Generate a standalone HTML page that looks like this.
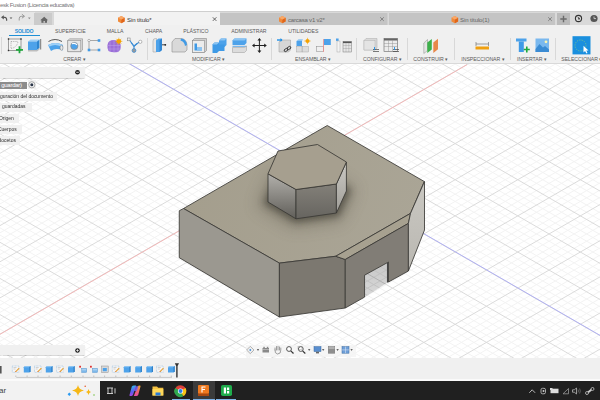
<!DOCTYPE html>
<html><head><meta charset="utf-8">
<style>
*{margin:0;padding:0;box-sizing:border-box}
html,body{width:600px;height:400px;overflow:hidden;background:#fff;font-family:"Liberation Sans",sans-serif}
.a{position:absolute}
.t{position:absolute;white-space:nowrap;line-height:1}
svg{position:absolute;left:0;top:0}
.lbl{position:absolute;white-space:nowrap;line-height:1;font-size:5.2px;color:#5a5a5a;letter-spacing:-0.05px}
.sep{position:absolute;width:1px;background:#d8d8d8;top:38px;height:22px}
.bi{position:absolute;left:0;height:8.5px;background:#f0f0f0;white-space:nowrap}.bt{position:absolute;white-space:nowrap;font-size:5.8px;color:#2a2a2a;line-height:1;transform:scaleX(0.855);transform-origin:0 0}
</style></head><body>
<!-- viewport -->
<svg width="600" height="400" viewBox="0 0 600 400">
<defs><clipPath id="vp"><rect x="0" y="63" width="600" height="296"/></clipPath></defs>
<g clip-path="url(#vp)" shape-rendering="auto">
<line x1="0" y1="-285.49" x2="600" y2="60.92" stroke="#f3f3f3"/><line x1="0" y1="-278.26" x2="600" y2="68.15" stroke="#f3f3f3"/><line x1="0" y1="-271.03" x2="600" y2="75.38" stroke="#f3f3f3"/><line x1="0" y1="-256.57" x2="600" y2="89.84" stroke="#f3f3f3"/><line x1="0" y1="-249.34" x2="600" y2="97.07" stroke="#f3f3f3"/><line x1="0" y1="-242.11" x2="600" y2="104.30" stroke="#f3f3f3"/><line x1="0" y1="-234.88" x2="600" y2="111.53" stroke="#f3f3f3"/><line x1="0" y1="-220.42" x2="600" y2="125.99" stroke="#f3f3f3"/><line x1="0" y1="-213.19" x2="600" y2="133.22" stroke="#f3f3f3"/><line x1="0" y1="-205.96" x2="600" y2="140.45" stroke="#f3f3f3"/><line x1="0" y1="-198.73" x2="600" y2="147.68" stroke="#f3f3f3"/><line x1="0" y1="-184.27" x2="600" y2="162.14" stroke="#f3f3f3"/><line x1="0" y1="-177.04" x2="600" y2="169.37" stroke="#f3f3f3"/><line x1="0" y1="-169.81" x2="600" y2="176.60" stroke="#f3f3f3"/><line x1="0" y1="-162.58" x2="600" y2="183.83" stroke="#f3f3f3"/><line x1="0" y1="-148.12" x2="600" y2="198.29" stroke="#f3f3f3"/><line x1="0" y1="-140.89" x2="600" y2="205.52" stroke="#f3f3f3"/><line x1="0" y1="-133.66" x2="600" y2="212.75" stroke="#f3f3f3"/><line x1="0" y1="-126.43" x2="600" y2="219.98" stroke="#f3f3f3"/><line x1="0" y1="-111.97" x2="600" y2="234.44" stroke="#f3f3f3"/><line x1="0" y1="-104.74" x2="600" y2="241.67" stroke="#f3f3f3"/><line x1="0" y1="-97.51" x2="600" y2="248.90" stroke="#f3f3f3"/><line x1="0" y1="-90.28" x2="600" y2="256.13" stroke="#f3f3f3"/><line x1="0" y1="-75.82" x2="600" y2="270.59" stroke="#f3f3f3"/><line x1="0" y1="-68.59" x2="600" y2="277.82" stroke="#f3f3f3"/><line x1="0" y1="-61.36" x2="600" y2="285.05" stroke="#f3f3f3"/><line x1="0" y1="-54.13" x2="600" y2="292.28" stroke="#f3f3f3"/><line x1="0" y1="-39.67" x2="600" y2="306.74" stroke="#f3f3f3"/><line x1="0" y1="-32.44" x2="600" y2="313.97" stroke="#f3f3f3"/><line x1="0" y1="-25.21" x2="600" y2="321.20" stroke="#f3f3f3"/><line x1="0" y1="-17.98" x2="600" y2="328.43" stroke="#f3f3f3"/><line x1="0" y1="-3.52" x2="600" y2="342.89" stroke="#f3f3f3"/><line x1="0" y1="3.71" x2="600" y2="350.12" stroke="#f3f3f3"/><line x1="0" y1="10.94" x2="600" y2="357.35" stroke="#f3f3f3"/><line x1="0" y1="18.17" x2="600" y2="364.58" stroke="#f3f3f3"/><line x1="0" y1="32.63" x2="600" y2="379.04" stroke="#f3f3f3"/><line x1="0" y1="39.86" x2="600" y2="386.27" stroke="#f3f3f3"/><line x1="0" y1="47.09" x2="600" y2="393.50" stroke="#f3f3f3"/><line x1="0" y1="54.32" x2="600" y2="400.73" stroke="#f3f3f3"/><line x1="0" y1="68.78" x2="600" y2="415.19" stroke="#f3f3f3"/><line x1="0" y1="76.01" x2="600" y2="422.42" stroke="#f3f3f3"/><line x1="0" y1="83.24" x2="600" y2="429.65" stroke="#f3f3f3"/><line x1="0" y1="90.47" x2="600" y2="436.88" stroke="#f3f3f3"/><line x1="0" y1="104.93" x2="600" y2="451.34" stroke="#f3f3f3"/><line x1="0" y1="112.16" x2="600" y2="458.57" stroke="#f3f3f3"/><line x1="0" y1="119.39" x2="600" y2="465.80" stroke="#f3f3f3"/><line x1="0" y1="126.62" x2="600" y2="473.03" stroke="#f3f3f3"/><line x1="0" y1="141.08" x2="600" y2="487.49" stroke="#f3f3f3"/><line x1="0" y1="148.31" x2="600" y2="494.72" stroke="#f3f3f3"/><line x1="0" y1="155.54" x2="600" y2="501.95" stroke="#f3f3f3"/><line x1="0" y1="162.77" x2="600" y2="509.18" stroke="#f3f3f3"/><line x1="0" y1="177.23" x2="600" y2="523.64" stroke="#f3f3f3"/><line x1="0" y1="184.46" x2="600" y2="530.87" stroke="#f3f3f3"/><line x1="0" y1="191.69" x2="600" y2="538.10" stroke="#f3f3f3"/><line x1="0" y1="198.92" x2="600" y2="545.33" stroke="#f3f3f3"/><line x1="0" y1="213.38" x2="600" y2="559.79" stroke="#f3f3f3"/><line x1="0" y1="220.61" x2="600" y2="567.02" stroke="#f3f3f3"/><line x1="0" y1="227.84" x2="600" y2="574.25" stroke="#f3f3f3"/><line x1="0" y1="235.07" x2="600" y2="581.48" stroke="#f3f3f3"/><line x1="0" y1="249.53" x2="600" y2="595.94" stroke="#f3f3f3"/><line x1="0" y1="256.76" x2="600" y2="603.17" stroke="#f3f3f3"/><line x1="0" y1="263.99" x2="600" y2="610.40" stroke="#f3f3f3"/><line x1="0" y1="271.22" x2="600" y2="617.63" stroke="#f3f3f3"/><line x1="0" y1="285.68" x2="600" y2="632.09" stroke="#f3f3f3"/><line x1="0" y1="292.91" x2="600" y2="639.32" stroke="#f3f3f3"/><line x1="0" y1="300.14" x2="600" y2="646.55" stroke="#f3f3f3"/><line x1="0" y1="307.37" x2="600" y2="653.78" stroke="#f3f3f3"/><line x1="0" y1="321.83" x2="600" y2="668.24" stroke="#f3f3f3"/><line x1="0" y1="329.06" x2="600" y2="675.47" stroke="#f3f3f3"/><line x1="0" y1="336.29" x2="600" y2="682.70" stroke="#f3f3f3"/><line x1="0" y1="343.52" x2="600" y2="689.93" stroke="#f3f3f3"/><line x1="0" y1="357.98" x2="600" y2="704.39" stroke="#f3f3f3"/><line x1="0" y1="59.31" x2="600" y2="-287.10" stroke="#f3f3f3"/><line x1="0" y1="66.54" x2="600" y2="-279.87" stroke="#f3f3f3"/><line x1="0" y1="73.77" x2="600" y2="-272.64" stroke="#f3f3f3"/><line x1="0" y1="88.23" x2="600" y2="-258.18" stroke="#f3f3f3"/><line x1="0" y1="95.46" x2="600" y2="-250.95" stroke="#f3f3f3"/><line x1="0" y1="102.69" x2="600" y2="-243.72" stroke="#f3f3f3"/><line x1="0" y1="109.92" x2="600" y2="-236.49" stroke="#f3f3f3"/><line x1="0" y1="124.38" x2="600" y2="-222.03" stroke="#f3f3f3"/><line x1="0" y1="131.61" x2="600" y2="-214.80" stroke="#f3f3f3"/><line x1="0" y1="138.84" x2="600" y2="-207.57" stroke="#f3f3f3"/><line x1="0" y1="146.07" x2="600" y2="-200.34" stroke="#f3f3f3"/><line x1="0" y1="160.53" x2="600" y2="-185.88" stroke="#f3f3f3"/><line x1="0" y1="167.76" x2="600" y2="-178.65" stroke="#f3f3f3"/><line x1="0" y1="174.99" x2="600" y2="-171.42" stroke="#f3f3f3"/><line x1="0" y1="182.22" x2="600" y2="-164.19" stroke="#f3f3f3"/><line x1="0" y1="196.68" x2="600" y2="-149.73" stroke="#f3f3f3"/><line x1="0" y1="203.91" x2="600" y2="-142.50" stroke="#f3f3f3"/><line x1="0" y1="211.14" x2="600" y2="-135.27" stroke="#f3f3f3"/><line x1="0" y1="218.37" x2="600" y2="-128.04" stroke="#f3f3f3"/><line x1="0" y1="232.83" x2="600" y2="-113.58" stroke="#f3f3f3"/><line x1="0" y1="240.06" x2="600" y2="-106.35" stroke="#f3f3f3"/><line x1="0" y1="247.29" x2="600" y2="-99.12" stroke="#f3f3f3"/><line x1="0" y1="254.52" x2="600" y2="-91.89" stroke="#f3f3f3"/><line x1="0" y1="268.98" x2="600" y2="-77.43" stroke="#f3f3f3"/><line x1="0" y1="276.21" x2="600" y2="-70.20" stroke="#f3f3f3"/><line x1="0" y1="283.44" x2="600" y2="-62.97" stroke="#f3f3f3"/><line x1="0" y1="290.67" x2="600" y2="-55.74" stroke="#f3f3f3"/><line x1="0" y1="305.13" x2="600" y2="-41.28" stroke="#f3f3f3"/><line x1="0" y1="312.36" x2="600" y2="-34.05" stroke="#f3f3f3"/><line x1="0" y1="319.59" x2="600" y2="-26.82" stroke="#f3f3f3"/><line x1="0" y1="326.82" x2="600" y2="-19.59" stroke="#f3f3f3"/><line x1="0" y1="341.28" x2="600" y2="-5.13" stroke="#f3f3f3"/><line x1="0" y1="348.51" x2="600" y2="2.10" stroke="#f3f3f3"/><line x1="0" y1="355.74" x2="600" y2="9.33" stroke="#f3f3f3"/><line x1="0" y1="362.97" x2="600" y2="16.56" stroke="#f3f3f3"/><line x1="0" y1="377.43" x2="600" y2="31.02" stroke="#f3f3f3"/><line x1="0" y1="384.66" x2="600" y2="38.25" stroke="#f3f3f3"/><line x1="0" y1="391.89" x2="600" y2="45.48" stroke="#f3f3f3"/><line x1="0" y1="399.12" x2="600" y2="52.71" stroke="#f3f3f3"/><line x1="0" y1="413.58" x2="600" y2="67.17" stroke="#f3f3f3"/><line x1="0" y1="420.81" x2="600" y2="74.40" stroke="#f3f3f3"/><line x1="0" y1="428.04" x2="600" y2="81.63" stroke="#f3f3f3"/><line x1="0" y1="435.27" x2="600" y2="88.86" stroke="#f3f3f3"/><line x1="0" y1="449.73" x2="600" y2="103.32" stroke="#f3f3f3"/><line x1="0" y1="456.96" x2="600" y2="110.55" stroke="#f3f3f3"/><line x1="0" y1="464.19" x2="600" y2="117.78" stroke="#f3f3f3"/><line x1="0" y1="471.42" x2="600" y2="125.01" stroke="#f3f3f3"/><line x1="0" y1="485.88" x2="600" y2="139.47" stroke="#f3f3f3"/><line x1="0" y1="493.11" x2="600" y2="146.70" stroke="#f3f3f3"/><line x1="0" y1="500.34" x2="600" y2="153.93" stroke="#f3f3f3"/><line x1="0" y1="507.57" x2="600" y2="161.16" stroke="#f3f3f3"/><line x1="0" y1="522.03" x2="600" y2="175.62" stroke="#f3f3f3"/><line x1="0" y1="529.26" x2="600" y2="182.85" stroke="#f3f3f3"/><line x1="0" y1="536.49" x2="600" y2="190.08" stroke="#f3f3f3"/><line x1="0" y1="543.72" x2="600" y2="197.31" stroke="#f3f3f3"/><line x1="0" y1="558.18" x2="600" y2="211.77" stroke="#f3f3f3"/><line x1="0" y1="565.41" x2="600" y2="219.00" stroke="#f3f3f3"/><line x1="0" y1="572.64" x2="600" y2="226.23" stroke="#f3f3f3"/><line x1="0" y1="579.87" x2="600" y2="233.46" stroke="#f3f3f3"/><line x1="0" y1="594.33" x2="600" y2="247.92" stroke="#f3f3f3"/><line x1="0" y1="601.56" x2="600" y2="255.15" stroke="#f3f3f3"/><line x1="0" y1="608.79" x2="600" y2="262.38" stroke="#f3f3f3"/><line x1="0" y1="616.02" x2="600" y2="269.61" stroke="#f3f3f3"/><line x1="0" y1="630.48" x2="600" y2="284.07" stroke="#f3f3f3"/><line x1="0" y1="637.71" x2="600" y2="291.30" stroke="#f3f3f3"/><line x1="0" y1="644.94" x2="600" y2="298.53" stroke="#f3f3f3"/><line x1="0" y1="652.17" x2="600" y2="305.76" stroke="#f3f3f3"/><line x1="0" y1="666.63" x2="600" y2="320.22" stroke="#f3f3f3"/><line x1="0" y1="673.86" x2="600" y2="327.45" stroke="#f3f3f3"/><line x1="0" y1="681.09" x2="600" y2="334.68" stroke="#f3f3f3"/><line x1="0" y1="688.32" x2="600" y2="341.91" stroke="#f3f3f3"/><line x1="0" y1="702.78" x2="600" y2="356.37" stroke="#f3f3f3"/><line x1="0" y1="710.01" x2="600" y2="363.60" stroke="#f3f3f3"/><line x1="0" y1="-263.80" x2="600" y2="82.61" stroke="#dbdbdb"/><line x1="0" y1="-227.65" x2="600" y2="118.76" stroke="#dbdbdb"/><line x1="0" y1="-191.50" x2="600" y2="154.91" stroke="#dbdbdb"/><line x1="0" y1="-155.35" x2="600" y2="191.06" stroke="#dbdbdb"/><line x1="0" y1="-119.20" x2="600" y2="227.21" stroke="#dbdbdb"/><line x1="0" y1="-83.05" x2="600" y2="263.36" stroke="#dbdbdb"/><line x1="0" y1="-46.90" x2="600" y2="299.51" stroke="#dbdbdb"/><line x1="0" y1="-10.75" x2="600" y2="335.66" stroke="#dbdbdb"/><line x1="0" y1="25.40" x2="600" y2="371.81" stroke="#dbdbdb"/><line x1="0" y1="61.55" x2="600" y2="407.96" stroke="#dbdbdb"/><line x1="0" y1="97.70" x2="600" y2="444.11" stroke="#dbdbdb"/><line x1="0" y1="133.85" x2="600" y2="480.26" stroke="#dbdbdb"/><line x1="0" y1="170.00" x2="600" y2="516.41" stroke="#dbdbdb"/><line x1="0" y1="206.15" x2="600" y2="552.56" stroke="#dbdbdb"/><line x1="0" y1="242.30" x2="600" y2="588.71" stroke="#dbdbdb"/><line x1="0" y1="278.45" x2="600" y2="624.86" stroke="#dbdbdb"/><line x1="0" y1="314.60" x2="600" y2="661.01" stroke="#dbdbdb"/><line x1="0" y1="350.75" x2="600" y2="697.16" stroke="#dbdbdb"/><line x1="0" y1="81.00" x2="600" y2="-265.41" stroke="#dbdbdb"/><line x1="0" y1="117.15" x2="600" y2="-229.26" stroke="#dbdbdb"/><line x1="0" y1="153.30" x2="600" y2="-193.11" stroke="#dbdbdb"/><line x1="0" y1="189.45" x2="600" y2="-156.96" stroke="#dbdbdb"/><line x1="0" y1="225.60" x2="600" y2="-120.81" stroke="#dbdbdb"/><line x1="0" y1="261.75" x2="600" y2="-84.66" stroke="#dbdbdb"/><line x1="0" y1="297.90" x2="600" y2="-48.51" stroke="#dbdbdb"/><line x1="0" y1="334.05" x2="600" y2="-12.36" stroke="#dbdbdb"/><line x1="0" y1="370.20" x2="600" y2="23.79" stroke="#dbdbdb"/><line x1="0" y1="406.35" x2="600" y2="59.94" stroke="#dbdbdb"/><line x1="0" y1="442.50" x2="600" y2="96.09" stroke="#dbdbdb"/><line x1="0" y1="478.65" x2="600" y2="132.24" stroke="#dbdbdb"/><line x1="0" y1="514.80" x2="600" y2="168.39" stroke="#dbdbdb"/><line x1="0" y1="550.95" x2="600" y2="204.54" stroke="#dbdbdb"/><line x1="0" y1="587.10" x2="600" y2="240.69" stroke="#dbdbdb"/><line x1="0" y1="623.25" x2="600" y2="276.84" stroke="#dbdbdb"/><line x1="0" y1="659.40" x2="600" y2="312.99" stroke="#dbdbdb"/><line x1="0" y1="695.55" x2="600" y2="349.14" stroke="#dbdbdb"/>
<line x1="0" y1="-11.06" x2="600" y2="335.35" stroke="#a6a6f4" stroke-width="0.85"/><line x1="0" y1="334.33" x2="467" y2="64.70" stroke="#f4b0b0" stroke-width="0.85"/>
<defs><linearGradient id="gTop" x1="200" y1="150" x2="410" y2="240" gradientUnits="userSpaceOnUse"><stop offset="0" stop-color="#a49e8d"/><stop offset="1" stop-color="#aaa596"/></linearGradient><filter id="blur6" x="-50%" y="-50%" width="200%" height="200%"><feGaussianBlur stdDeviation="8"/></filter><filter id="blur3" x="-50%" y="-50%" width="200%" height="200%"><feGaussianBlur stdDeviation="3.5"/></filter><linearGradient id="gHL" x1="0" y1="175" x2="0" y2="215" gradientUnits="userSpaceOnUse"><stop offset="0" stop-color="#b0aea9"/><stop offset="1" stop-color="#676560"/></linearGradient><linearGradient id="gHF" x1="0" y1="185" x2="0" y2="218" gradientUnits="userSpaceOnUse"><stop offset="0" stop-color="#827f78"/><stop offset="1" stop-color="#676560"/></linearGradient><linearGradient id="gHR" x1="0" y1="165" x2="0" y2="212" gradientUnits="userSpaceOnUse"><stop offset="0" stop-color="#c9c7c2"/><stop offset="1" stop-color="#a09e98"/></linearGradient><linearGradient id="gSlot" x1="0" y1="265" x2="0" y2="297" gradientUnits="userSpaceOnUse"><stop offset="0" stop-color="#c9c9c9"/><stop offset="1" stop-color="#d8d8d8"/></linearGradient><linearGradient id="gRF" x1="0" y1="185" x2="0" y2="270" gradientUnits="userSpaceOnUse"><stop offset="0" stop-color="#c9c7c1"/><stop offset="1" stop-color="#bab8b2"/></linearGradient><clipPath id="cTop"><polygon points="183.5,208.5 327.25,125.5 424.25,181.5 410.5,213.4 335.75,256.25 279.4,263.1"/></clipPath></defs><polygon points="183.5,208.5 327.25,125.5 424.25,181.5 410.5,213.4 335.75,256.25 279.4,263.1" fill="url(#gTop)"/><g clip-path="url(#cTop)"><polygon points="268,202 296,218.8 336.4,213 346.4,191 317.5,173.5 278,180" transform="translate(-1 1)" fill="#5a554a" stroke="#5a554a" stroke-width="16" opacity="0.4" filter="url(#blur6)"/><polygon points="268,202 296,218.8 336.4,213 346.4,191 317.5,173.5 278,180" fill="#4a463c" stroke="#4a463c" stroke-width="7" opacity="0.72" filter="url(#blur3)"/></g><polygon points="183.5,208.5 327.25,125.5 424.25,181.5 410.5,213.4 335.75,256.25 279.4,263.1" fill="none" stroke="#3a3935" stroke-width="0.85" stroke-linejoin="round"/><polygon points="179.25,210.75 183.5,208.5 279.4,263.1 279.4,317 179.25,257.7" fill="#9b9890" stroke="#3a3935" stroke-width="0.85" stroke-linejoin="round"/><polygon points="279.4,263.1 335.75,256.25 345.25,259.5 345.25,308 279.4,317" fill="#7c7870" stroke="#3a3935" stroke-width="0.85" stroke-linejoin="round"/><polygon points="335.75,256.25 410.5,213.4 408.4,223.4 345.25,259.5" fill="#a7a190" stroke="#3a3935" stroke-width="0.85" stroke-linejoin="round"/><clipPath id="cSlot"><polygon points="364.55,275.2 388.5,262 388.5,282 364.55,297.1"/></clipPath><polygon points="364.55,275.2 388.5,262 388.5,282 364.55,297.1" fill="url(#gSlot)"/><g clip-path="url(#cSlot)"><line x1="0" y1="-285.49" x2="600" y2="60.92" stroke="#c2c2c2"/><line x1="0" y1="-278.26" x2="600" y2="68.15" stroke="#c2c2c2"/><line x1="0" y1="-271.03" x2="600" y2="75.38" stroke="#c2c2c2"/><line x1="0" y1="-256.57" x2="600" y2="89.84" stroke="#c2c2c2"/><line x1="0" y1="-249.34" x2="600" y2="97.07" stroke="#c2c2c2"/><line x1="0" y1="-242.11" x2="600" y2="104.30" stroke="#c2c2c2"/><line x1="0" y1="-234.88" x2="600" y2="111.53" stroke="#c2c2c2"/><line x1="0" y1="-220.42" x2="600" y2="125.99" stroke="#c2c2c2"/><line x1="0" y1="-213.19" x2="600" y2="133.22" stroke="#c2c2c2"/><line x1="0" y1="-205.96" x2="600" y2="140.45" stroke="#c2c2c2"/><line x1="0" y1="-198.73" x2="600" y2="147.68" stroke="#c2c2c2"/><line x1="0" y1="-184.27" x2="600" y2="162.14" stroke="#c2c2c2"/><line x1="0" y1="-177.04" x2="600" y2="169.37" stroke="#c2c2c2"/><line x1="0" y1="-169.81" x2="600" y2="176.60" stroke="#c2c2c2"/><line x1="0" y1="-162.58" x2="600" y2="183.83" stroke="#c2c2c2"/><line x1="0" y1="-148.12" x2="600" y2="198.29" stroke="#c2c2c2"/><line x1="0" y1="-140.89" x2="600" y2="205.52" stroke="#c2c2c2"/><line x1="0" y1="-133.66" x2="600" y2="212.75" stroke="#c2c2c2"/><line x1="0" y1="-126.43" x2="600" y2="219.98" stroke="#c2c2c2"/><line x1="0" y1="-111.97" x2="600" y2="234.44" stroke="#c2c2c2"/><line x1="0" y1="-104.74" x2="600" y2="241.67" stroke="#c2c2c2"/><line x1="0" y1="-97.51" x2="600" y2="248.90" stroke="#c2c2c2"/><line x1="0" y1="-90.28" x2="600" y2="256.13" stroke="#c2c2c2"/><line x1="0" y1="-75.82" x2="600" y2="270.59" stroke="#c2c2c2"/><line x1="0" y1="-68.59" x2="600" y2="277.82" stroke="#c2c2c2"/><line x1="0" y1="-61.36" x2="600" y2="285.05" stroke="#c2c2c2"/><line x1="0" y1="-54.13" x2="600" y2="292.28" stroke="#c2c2c2"/><line x1="0" y1="-39.67" x2="600" y2="306.74" stroke="#c2c2c2"/><line x1="0" y1="-32.44" x2="600" y2="313.97" stroke="#c2c2c2"/><line x1="0" y1="-25.21" x2="600" y2="321.20" stroke="#c2c2c2"/><line x1="0" y1="-17.98" x2="600" y2="328.43" stroke="#c2c2c2"/><line x1="0" y1="-3.52" x2="600" y2="342.89" stroke="#c2c2c2"/><line x1="0" y1="3.71" x2="600" y2="350.12" stroke="#c2c2c2"/><line x1="0" y1="10.94" x2="600" y2="357.35" stroke="#c2c2c2"/><line x1="0" y1="18.17" x2="600" y2="364.58" stroke="#c2c2c2"/><line x1="0" y1="32.63" x2="600" y2="379.04" stroke="#c2c2c2"/><line x1="0" y1="39.86" x2="600" y2="386.27" stroke="#c2c2c2"/><line x1="0" y1="47.09" x2="600" y2="393.50" stroke="#c2c2c2"/><line x1="0" y1="54.32" x2="600" y2="400.73" stroke="#c2c2c2"/><line x1="0" y1="68.78" x2="600" y2="415.19" stroke="#c2c2c2"/><line x1="0" y1="76.01" x2="600" y2="422.42" stroke="#c2c2c2"/><line x1="0" y1="83.24" x2="600" y2="429.65" stroke="#c2c2c2"/><line x1="0" y1="90.47" x2="600" y2="436.88" stroke="#c2c2c2"/><line x1="0" y1="104.93" x2="600" y2="451.34" stroke="#c2c2c2"/><line x1="0" y1="112.16" x2="600" y2="458.57" stroke="#c2c2c2"/><line x1="0" y1="119.39" x2="600" y2="465.80" stroke="#c2c2c2"/><line x1="0" y1="126.62" x2="600" y2="473.03" stroke="#c2c2c2"/><line x1="0" y1="141.08" x2="600" y2="487.49" stroke="#c2c2c2"/><line x1="0" y1="148.31" x2="600" y2="494.72" stroke="#c2c2c2"/><line x1="0" y1="155.54" x2="600" y2="501.95" stroke="#c2c2c2"/><line x1="0" y1="162.77" x2="600" y2="509.18" stroke="#c2c2c2"/><line x1="0" y1="177.23" x2="600" y2="523.64" stroke="#c2c2c2"/><line x1="0" y1="184.46" x2="600" y2="530.87" stroke="#c2c2c2"/><line x1="0" y1="191.69" x2="600" y2="538.10" stroke="#c2c2c2"/><line x1="0" y1="198.92" x2="600" y2="545.33" stroke="#c2c2c2"/><line x1="0" y1="213.38" x2="600" y2="559.79" stroke="#c2c2c2"/><line x1="0" y1="220.61" x2="600" y2="567.02" stroke="#c2c2c2"/><line x1="0" y1="227.84" x2="600" y2="574.25" stroke="#c2c2c2"/><line x1="0" y1="235.07" x2="600" y2="581.48" stroke="#c2c2c2"/><line x1="0" y1="249.53" x2="600" y2="595.94" stroke="#c2c2c2"/><line x1="0" y1="256.76" x2="600" y2="603.17" stroke="#c2c2c2"/><line x1="0" y1="263.99" x2="600" y2="610.40" stroke="#c2c2c2"/><line x1="0" y1="271.22" x2="600" y2="617.63" stroke="#c2c2c2"/><line x1="0" y1="285.68" x2="600" y2="632.09" stroke="#c2c2c2"/><line x1="0" y1="292.91" x2="600" y2="639.32" stroke="#c2c2c2"/><line x1="0" y1="300.14" x2="600" y2="646.55" stroke="#c2c2c2"/><line x1="0" y1="307.37" x2="600" y2="653.78" stroke="#c2c2c2"/><line x1="0" y1="321.83" x2="600" y2="668.24" stroke="#c2c2c2"/><line x1="0" y1="329.06" x2="600" y2="675.47" stroke="#c2c2c2"/><line x1="0" y1="336.29" x2="600" y2="682.70" stroke="#c2c2c2"/><line x1="0" y1="343.52" x2="600" y2="689.93" stroke="#c2c2c2"/><line x1="0" y1="357.98" x2="600" y2="704.39" stroke="#c2c2c2"/><line x1="0" y1="59.31" x2="600" y2="-287.10" stroke="#c2c2c2"/><line x1="0" y1="66.54" x2="600" y2="-279.87" stroke="#c2c2c2"/><line x1="0" y1="73.77" x2="600" y2="-272.64" stroke="#c2c2c2"/><line x1="0" y1="88.23" x2="600" y2="-258.18" stroke="#c2c2c2"/><line x1="0" y1="95.46" x2="600" y2="-250.95" stroke="#c2c2c2"/><line x1="0" y1="102.69" x2="600" y2="-243.72" stroke="#c2c2c2"/><line x1="0" y1="109.92" x2="600" y2="-236.49" stroke="#c2c2c2"/><line x1="0" y1="124.38" x2="600" y2="-222.03" stroke="#c2c2c2"/><line x1="0" y1="131.61" x2="600" y2="-214.80" stroke="#c2c2c2"/><line x1="0" y1="138.84" x2="600" y2="-207.57" stroke="#c2c2c2"/><line x1="0" y1="146.07" x2="600" y2="-200.34" stroke="#c2c2c2"/><line x1="0" y1="160.53" x2="600" y2="-185.88" stroke="#c2c2c2"/><line x1="0" y1="167.76" x2="600" y2="-178.65" stroke="#c2c2c2"/><line x1="0" y1="174.99" x2="600" y2="-171.42" stroke="#c2c2c2"/><line x1="0" y1="182.22" x2="600" y2="-164.19" stroke="#c2c2c2"/><line x1="0" y1="196.68" x2="600" y2="-149.73" stroke="#c2c2c2"/><line x1="0" y1="203.91" x2="600" y2="-142.50" stroke="#c2c2c2"/><line x1="0" y1="211.14" x2="600" y2="-135.27" stroke="#c2c2c2"/><line x1="0" y1="218.37" x2="600" y2="-128.04" stroke="#c2c2c2"/><line x1="0" y1="232.83" x2="600" y2="-113.58" stroke="#c2c2c2"/><line x1="0" y1="240.06" x2="600" y2="-106.35" stroke="#c2c2c2"/><line x1="0" y1="247.29" x2="600" y2="-99.12" stroke="#c2c2c2"/><line x1="0" y1="254.52" x2="600" y2="-91.89" stroke="#c2c2c2"/><line x1="0" y1="268.98" x2="600" y2="-77.43" stroke="#c2c2c2"/><line x1="0" y1="276.21" x2="600" y2="-70.20" stroke="#c2c2c2"/><line x1="0" y1="283.44" x2="600" y2="-62.97" stroke="#c2c2c2"/><line x1="0" y1="290.67" x2="600" y2="-55.74" stroke="#c2c2c2"/><line x1="0" y1="305.13" x2="600" y2="-41.28" stroke="#c2c2c2"/><line x1="0" y1="312.36" x2="600" y2="-34.05" stroke="#c2c2c2"/><line x1="0" y1="319.59" x2="600" y2="-26.82" stroke="#c2c2c2"/><line x1="0" y1="326.82" x2="600" y2="-19.59" stroke="#c2c2c2"/><line x1="0" y1="341.28" x2="600" y2="-5.13" stroke="#c2c2c2"/><line x1="0" y1="348.51" x2="600" y2="2.10" stroke="#c2c2c2"/><line x1="0" y1="355.74" x2="600" y2="9.33" stroke="#c2c2c2"/><line x1="0" y1="362.97" x2="600" y2="16.56" stroke="#c2c2c2"/><line x1="0" y1="377.43" x2="600" y2="31.02" stroke="#c2c2c2"/><line x1="0" y1="384.66" x2="600" y2="38.25" stroke="#c2c2c2"/><line x1="0" y1="391.89" x2="600" y2="45.48" stroke="#c2c2c2"/><line x1="0" y1="399.12" x2="600" y2="52.71" stroke="#c2c2c2"/><line x1="0" y1="413.58" x2="600" y2="67.17" stroke="#c2c2c2"/><line x1="0" y1="420.81" x2="600" y2="74.40" stroke="#c2c2c2"/><line x1="0" y1="428.04" x2="600" y2="81.63" stroke="#c2c2c2"/><line x1="0" y1="435.27" x2="600" y2="88.86" stroke="#c2c2c2"/><line x1="0" y1="449.73" x2="600" y2="103.32" stroke="#c2c2c2"/><line x1="0" y1="456.96" x2="600" y2="110.55" stroke="#c2c2c2"/><line x1="0" y1="464.19" x2="600" y2="117.78" stroke="#c2c2c2"/><line x1="0" y1="471.42" x2="600" y2="125.01" stroke="#c2c2c2"/><line x1="0" y1="485.88" x2="600" y2="139.47" stroke="#c2c2c2"/><line x1="0" y1="493.11" x2="600" y2="146.70" stroke="#c2c2c2"/><line x1="0" y1="500.34" x2="600" y2="153.93" stroke="#c2c2c2"/><line x1="0" y1="507.57" x2="600" y2="161.16" stroke="#c2c2c2"/><line x1="0" y1="522.03" x2="600" y2="175.62" stroke="#c2c2c2"/><line x1="0" y1="529.26" x2="600" y2="182.85" stroke="#c2c2c2"/><line x1="0" y1="536.49" x2="600" y2="190.08" stroke="#c2c2c2"/><line x1="0" y1="543.72" x2="600" y2="197.31" stroke="#c2c2c2"/><line x1="0" y1="558.18" x2="600" y2="211.77" stroke="#c2c2c2"/><line x1="0" y1="565.41" x2="600" y2="219.00" stroke="#c2c2c2"/><line x1="0" y1="572.64" x2="600" y2="226.23" stroke="#c2c2c2"/><line x1="0" y1="579.87" x2="600" y2="233.46" stroke="#c2c2c2"/><line x1="0" y1="594.33" x2="600" y2="247.92" stroke="#c2c2c2"/><line x1="0" y1="601.56" x2="600" y2="255.15" stroke="#c2c2c2"/><line x1="0" y1="608.79" x2="600" y2="262.38" stroke="#c2c2c2"/><line x1="0" y1="616.02" x2="600" y2="269.61" stroke="#c2c2c2"/><line x1="0" y1="630.48" x2="600" y2="284.07" stroke="#c2c2c2"/><line x1="0" y1="637.71" x2="600" y2="291.30" stroke="#c2c2c2"/><line x1="0" y1="644.94" x2="600" y2="298.53" stroke="#c2c2c2"/><line x1="0" y1="652.17" x2="600" y2="305.76" stroke="#c2c2c2"/><line x1="0" y1="666.63" x2="600" y2="320.22" stroke="#c2c2c2"/><line x1="0" y1="673.86" x2="600" y2="327.45" stroke="#c2c2c2"/><line x1="0" y1="681.09" x2="600" y2="334.68" stroke="#c2c2c2"/><line x1="0" y1="688.32" x2="600" y2="341.91" stroke="#c2c2c2"/><line x1="0" y1="702.78" x2="600" y2="356.37" stroke="#c2c2c2"/><line x1="0" y1="710.01" x2="600" y2="363.60" stroke="#c2c2c2"/><line x1="0" y1="-263.80" x2="600" y2="82.61" stroke="#b0b0b0"/><line x1="0" y1="-227.65" x2="600" y2="118.76" stroke="#b0b0b0"/><line x1="0" y1="-191.50" x2="600" y2="154.91" stroke="#b0b0b0"/><line x1="0" y1="-155.35" x2="600" y2="191.06" stroke="#b0b0b0"/><line x1="0" y1="-119.20" x2="600" y2="227.21" stroke="#b0b0b0"/><line x1="0" y1="-83.05" x2="600" y2="263.36" stroke="#b0b0b0"/><line x1="0" y1="-46.90" x2="600" y2="299.51" stroke="#b0b0b0"/><line x1="0" y1="-10.75" x2="600" y2="335.66" stroke="#b0b0b0"/><line x1="0" y1="25.40" x2="600" y2="371.81" stroke="#b0b0b0"/><line x1="0" y1="61.55" x2="600" y2="407.96" stroke="#b0b0b0"/><line x1="0" y1="97.70" x2="600" y2="444.11" stroke="#b0b0b0"/><line x1="0" y1="133.85" x2="600" y2="480.26" stroke="#b0b0b0"/><line x1="0" y1="170.00" x2="600" y2="516.41" stroke="#b0b0b0"/><line x1="0" y1="206.15" x2="600" y2="552.56" stroke="#b0b0b0"/><line x1="0" y1="242.30" x2="600" y2="588.71" stroke="#b0b0b0"/><line x1="0" y1="278.45" x2="600" y2="624.86" stroke="#b0b0b0"/><line x1="0" y1="314.60" x2="600" y2="661.01" stroke="#b0b0b0"/><line x1="0" y1="350.75" x2="600" y2="697.16" stroke="#b0b0b0"/><line x1="0" y1="81.00" x2="600" y2="-265.41" stroke="#b0b0b0"/><line x1="0" y1="117.15" x2="600" y2="-229.26" stroke="#b0b0b0"/><line x1="0" y1="153.30" x2="600" y2="-193.11" stroke="#b0b0b0"/><line x1="0" y1="189.45" x2="600" y2="-156.96" stroke="#b0b0b0"/><line x1="0" y1="225.60" x2="600" y2="-120.81" stroke="#b0b0b0"/><line x1="0" y1="261.75" x2="600" y2="-84.66" stroke="#b0b0b0"/><line x1="0" y1="297.90" x2="600" y2="-48.51" stroke="#b0b0b0"/><line x1="0" y1="334.05" x2="600" y2="-12.36" stroke="#b0b0b0"/><line x1="0" y1="370.20" x2="600" y2="23.79" stroke="#b0b0b0"/><line x1="0" y1="406.35" x2="600" y2="59.94" stroke="#b0b0b0"/><line x1="0" y1="442.50" x2="600" y2="96.09" stroke="#b0b0b0"/><line x1="0" y1="478.65" x2="600" y2="132.24" stroke="#b0b0b0"/><line x1="0" y1="514.80" x2="600" y2="168.39" stroke="#b0b0b0"/><line x1="0" y1="550.95" x2="600" y2="204.54" stroke="#b0b0b0"/><line x1="0" y1="587.10" x2="600" y2="240.69" stroke="#b0b0b0"/><line x1="0" y1="623.25" x2="600" y2="276.84" stroke="#b0b0b0"/><line x1="0" y1="659.40" x2="600" y2="312.99" stroke="#b0b0b0"/><line x1="0" y1="695.55" x2="600" y2="349.14" stroke="#b0b0b0"/></g><polygon points="345.25,259.5 408.4,223.4 408.4,271 388.5,282 388.5,262 364.55,275.2 364.55,297.1 345.25,308" fill="#817d76" stroke="#3a3935" stroke-width="0.85" stroke-linejoin="round"/><path d="M387.6 263 V282.5" stroke="#444" stroke-width="1.3"/><polygon points="410.5,213.4 424.5,181.5 424.5,230 408.4,271 408.4,223.4" fill="url(#gRF)" stroke="#3a3935" stroke-width="0.85" stroke-linejoin="round"/><polygon points="268,173.8 296,189.5 296,218.8 268,202" fill="url(#gHL)" stroke="#3a3935" stroke-width="0.85" stroke-linejoin="round"/><polygon points="296,189.5 336.4,184 336.4,213 296,218.8" fill="url(#gHF)" stroke="#3a3935" stroke-width="0.85" stroke-linejoin="round"/><polygon points="336.4,184 346.4,162 346.4,191 336.4,213" fill="url(#gHR)" stroke="#3a3935" stroke-width="0.85" stroke-linejoin="round"/><polygon points="278,151 317.5,144.5 346.4,162 336.4,184 296,189.5 268,173.8" fill="#a69f8f" stroke="#3a3935" stroke-width="0.85" stroke-linejoin="round"/>
</g>
</svg>

<!-- title bar -->
<div class="a" style="left:0;top:0;width:600px;height:11px;background:#fff"></div>
<div class="t" style="left:0;top:2.3px;font-size:6.1px;color:#777;letter-spacing:-0.36px">esk Fusion (Licencia educativa)</div>
<div class="a" style="left:0;top:10.5px;width:600px;height:1px;background:#cfcfcf"></div>
<!-- tab bar -->
<div class="a" style="left:0;top:11.5px;width:600px;height:13.5px;background:#d9d9d9"></div>
<div class="a" style="left:0;top:11.5px;width:35px;height:13.5px;background:#e6e6e6"></div>
<div class="a" style="left:33.6px;top:12.7px;width:18.6px;height:12.3px;background:#cbcbcb"></div>
<div class="a" style="left:54px;top:11.5px;width:166px;height:13.5px;background:#f2f2f2"></div>
<div class="a" style="left:220px;top:13px;width:167.5px;height:12px;background:#c4c4c4"></div>
<div class="a" style="left:389px;top:13px;width:166px;height:12px;background:#c4c4c4"></div>
<div class="a" style="left:557px;top:13px;width:12.5px;height:12px;background:#bababa"></div>
<svg width="600" height="30" viewBox="0 0 600 30">
 <!-- undo -->
 <path d="M1 17.3 L3.8 15.2 V19.4Z" fill="#555"/><path d="M3.2 17.3 H4.6 Q7 17.3 6.6 20.8" stroke="#555" stroke-width="1.2" fill="none"/>
 <path d="M9.6 17.4 h2.8 l-1.4 1.6z" fill="#555"/>
 <path d="M24.5 16.3 L21.9 14.2 M24.5 16.3 L21.9 18.2 M24.2 16.3 H21.2 Q19.2 16.3 19.2 18.8 V20.5" stroke="#9a9a9a" stroke-width="1" fill="none"/>
 <path d="M28 17.6 h2.6 l-1.3 1.6z" fill="#8a8a8a"/>
 <!-- home -->
 <path d="M40.3 20.2 L44.2 16.8 L48.1 20.2Z" fill="#666"/><rect x="41.4" y="19.6" width="5.6" height="3.2" fill="#666"/><rect x="43.5" y="21" width="1.4" height="1.8" fill="#cbcbcb"/>
 <!-- tab cubes -->
 <g transform="translate(118,16)"><path d="M3.3 0 L6.6 1.8 V5.5 L3.3 7.3 L0 5.5 V1.8Z" fill="#f08a3a"/><path d="M3.3 3.6 L6.6 1.8 V5.5 L3.3 7.3Z" fill="#e0661a"/><path d="M0 1.8 L3.3 0 L6.6 1.8 L3.3 3.6Z" fill="#f9a868"/></g>
 <g transform="translate(279,16)"><path d="M3.3 0 L6.6 1.8 V5.5 L3.3 7.3 L0 5.5 V1.8Z" fill="#f08a3a"/><path d="M3.3 3.6 L6.6 1.8 V5.5 L3.3 7.3Z" fill="#e0661a"/><path d="M0 1.8 L3.3 0 L6.6 1.8 L3.3 3.6Z" fill="#f9a868"/></g>
 <g transform="translate(451.5,16)"><path d="M3.3 0 L6.6 1.8 V5.5 L3.3 7.3 L0 5.5 V1.8Z" fill="#f08a3a"/><path d="M3.3 3.6 L6.6 1.8 V5.5 L3.3 7.3Z" fill="#e0661a"/><path d="M0 1.8 L3.3 0 L6.6 1.8 L3.3 3.6Z" fill="#f9a868"/></g>
 <!-- close x -->
 <path d="M212.8 17.3 l3.6 3.6 M216.4 17.3 l-3.6 3.6" stroke="#555" stroke-width="0.9"/>
 <path d="M380.2 17.3 l3.6 3.6 M383.8 17.3 l-3.6 3.6" stroke="#7a7a7a" stroke-width="0.9"/>
 <path d="M548.2 17.3 l3.6 3.6 M551.8 17.3 l-3.6 3.6" stroke="#7a7a7a" stroke-width="0.9"/>
 <line x1="388" y1="13" x2="388" y2="25" stroke="#dadada" stroke-width="1"/>
 <!-- plus -->
 <path d="M563.5 15.8 V22.2 M560.3 19 H566.7" stroke="#6a6a6a" stroke-width="1.4"/>
 <!-- circle icon -->
 <circle cx="578.5" cy="18.5" r="3.1" fill="none" stroke="#333" stroke-width="1.1"/>
 <path d="M577.5 16.8 l2.5 1.5 l-1 2z" fill="#333"/>
 <circle cx="594" cy="18.5" r="3.6" fill="#555"/>
 <path d="M594 16.5 V18.6 H596" stroke="#ddd" stroke-width="0.8" fill="none"/>
</svg>
<div class="t" style="left:127px;top:16.6px;font-size:6px;color:#333;letter-spacing:-0.1px">Sin título*</div>
<div class="t" style="left:288px;top:16.6px;font-size:6px;color:#666;letter-spacing:-0.2px">carcasa v1 v2*</div>
<div class="t" style="left:460px;top:16.6px;font-size:6px;color:#666;letter-spacing:-0.1px">Sin título(1)</div>

<!-- toolbar -->
<div class="a" style="left:0;top:25px;width:600px;height:38px;background:#f0f0f0"></div>
<div class="a" style="left:0;top:62.5px;width:600px;height:0.8px;background:#d9d9d9"></div>
<div class="lbl" style="left:14.7px;top:29px;color:#1f8fd6;font-weight:bold;letter-spacing:-0.2px">SOLIDO</div>
<div class="a" style="left:8.5px;top:35px;width:31.5px;height:1.4px;background:#1f8fd6"></div>
<div class="lbl" style="left:55px;top:29px">SUPERFICIE</div>
<div class="lbl" style="left:106.7px;top:29px">MALLA</div>
<div class="lbl" style="left:145px;top:29px">CHAPA</div>
<div class="lbl" style="left:183.3px;top:29px">PLÁSTICO</div>
<div class="lbl" style="left:231.3px;top:29px">ADMINISTRAR</div>
<div class="lbl" style="left:288.3px;top:29px">UTILIDADES</div>

<div class="lbl" style="left:63.3px;top:56.8px">CREAR ▾</div>
<div class="lbl" style="left:192px;top:56.8px">MODIFICAR ▾</div>
<div class="lbl" style="left:295px;top:56.8px">ENSAMBLAR ▾</div>
<div class="lbl" style="left:363px;top:56.8px">CONFIGURAR ▾</div>
<div class="lbl" style="left:413.3px;top:56.8px">CONSTRUIR ▾</div>
<div class="lbl" style="left:461.3px;top:56.8px">INSPECCIONAR ▾</div>
<div class="lbl" style="left:517px;top:56.8px">INSERTAR ▾</div>
<div class="lbl" style="left:561.3px;top:56.8px">SELECCIONAR ▾</div>

<div class="sep" style="left:1px;top:37px;height:17px"></div>
<div class="sep" style="left:146.5px"></div>
<div class="sep" style="left:271px"></div>
<div class="sep" style="left:355.5px"></div>
<div class="sep" style="left:406.5px"></div>
<div class="sep" style="left:454px"></div>
<div class="sep" style="left:509.5px"></div>
<div class="sep" style="left:554.5px"></div>

<svg width="600" height="63" viewBox="0 0 600 63">
<rect x="8.5" y="39" width="12.5" height="11.5" fill="#f4f4f4" stroke="#777" stroke-width="0.7"/><path d="M11 41.5 v7 M11 41.5 h7 M11 48.5 q6 -1 7 -7" stroke="#888" stroke-width="0.6" stroke-dasharray="1 0.8" fill="none"/><rect x="7.8" y="38.3" width="1.4" height="1.4" fill="#333"/><rect x="20.3" y="38.3" width="1.4" height="1.4" fill="#333"/><rect x="7.8" y="49.8" width="1.4" height="1.4" fill="#333"/><path d="M19.5 46.3 v7 M16 49.8 h7" stroke="#1fa83c" stroke-width="1.8"/><path d="M28 41.5 L30.5 39.5 H39.5 L37 41.5Z" fill="#9fd0f7"/><rect x="28" y="41.5" width="9" height="8.5" fill="#4da2ea"/><path d="M37 41.5 L39.5 39.5 V48 L37 50Z" fill="#2e86d0"/><path d="M28 50 H37 L39.5 48 V49.5 L37 51.5 H28Z" fill="#bdbdbd"/><line x1="40.7" y1="39" x2="40.7" y2="49.5" stroke="#555" stroke-width="0.8"/><path d="M48.5 41.5 Q55 37.5 62 41.5" stroke="#444" stroke-width="0.9" fill="none"/><path d="M48 45 Q55 41 63 45 L62.5 50.5 Q56 47.5 51 51 Z" fill="#4da2ea"/><path d="M48 45 Q55 41 63 45 L61 46.5 Q55 43.5 49.5 46.5Z" fill="#9fd0f7"/><ellipse cx="61.5" cy="47.8" rx="1.5" ry="2.5" fill="#e8e8e8" stroke="#777" stroke-width="0.5"/><path d="M67.8 40.5 L69.5 38.8 H82.5 V50 L80.8 51.7 H67.8Z" fill="#d9d9d9" stroke="#8f8f8f" stroke-width="0.6"/><rect x="67.8" y="40.5" width="13" height="11.2" fill="#e6e6e6" stroke="#8f8f8f" stroke-width="0.6"/><circle cx="74.3" cy="46" r="3.6" fill="#4da2ea" stroke="#8a8a8a" stroke-width="0.7"/><path d="M72 43.8 Q75 42.5 77 45" stroke="#fff" stroke-width="1.2" fill="none"/><path d="M89 40.5 V50 M89 40.5 H99 M89 50 H99" stroke="#777" stroke-width="0.6"/><circle cx="89" cy="40.5" r="1.2" fill="#fff" stroke="#777" stroke-width="0.5"/><rect x="97.7" y="39.2" width="2.6" height="2.6" fill="#3f9ae6"/><rect x="87.7" y="48.7" width="2.6" height="2.6" fill="#3f9ae6"/><rect x="97.7" y="48.7" width="2.6" height="2.6" fill="#3f9ae6"/><path d="M107.5 45 Q108 40 114 40 Q119 40.5 120.5 44 Q121.5 50 118 52 Q112 53 108.5 51 Q107 48 107.5 45Z" fill="#9b6fd8"/><path d="M110 41.5 V51.5 M114 40 V52.5 M118 41 V52 M107.7 45.5 H121 M108.2 49 H121" stroke="#b99be8" stroke-width="0.6"/><circle cx="118.8" cy="41.3" r="2.4" fill="#f5a300"/><path d="M118.8 37.7 v7.2 M115.2 41.3 h7.2 M116.3 38.8 l5 5 M121.3 38.8 l-5 5" stroke="#f5a300" stroke-width="0.6"/><path d="M129 39.5 L134 46 L140 41.5 M134 46 V50" stroke="#3f8fd6" stroke-width="1.1" fill="none"/><path d="M131 42.5 L134 46.5 L137 43.5" stroke="#3f8fd6" stroke-width="1.1" fill="none"/><rect x="127.3" y="38" width="2.8" height="2.8" fill="#f0f0f0" stroke="#777" stroke-width="0.5"/><circle cx="140.3" cy="41.8" r="1.6" fill="#fff" stroke="#777" stroke-width="0.5"/><circle cx="134" cy="50.5" r="1.9" fill="#999" stroke="#3f8fd6" stroke-width="0.8"/><path d="M153 41 Q153 38.5 155.5 38.5 H156.5 V52 H153Z" fill="#e6e6e6" stroke="#999" stroke-width="0.5"/><path d="M156 40.5 L158.5 38.5 H162 V50 L159.5 52 H156Z" fill="#4da2ea"/><path d="M159.5 40.5 L162 38.5 V50 L159.5 52Z" fill="#2f86d3"/><path d="M162 44.8 H165.5" stroke="#333" stroke-width="0.9"/><circle cx="165.3" cy="44.8" r="0.9" fill="#222"/><path d="M172 42 L175 38.5 H181 Q186.5 39 187 45 V50 L185 52 H172Z" fill="#d9d9d9" stroke="#8f8f8f" stroke-width="0.6"/><path d="M181 38.5 Q186.5 39 187 45 L185 46 Q184.5 41.5 180.5 40.5Z" fill="#3f9ae6"/><path d="M192.5 40.5 L194.5 38.5 H206.5 V50.5 L204.5 52.5 H192.5Z" fill="#d0d0d0" stroke="#8a8a8a" stroke-width="0.6"/><rect x="192.5" y="40.5" width="12" height="12" fill="#ececec" stroke="#8a8a8a" stroke-width="0.6"/><path d="M194.5 43.5 H197 V47.5 H202 V50.5 H194.5Z" fill="#3f9ae6"/><path d="M197 47.5 H202 V50.5 H197Z" fill="#8cc4f2"/><path d="M219 40.5 L221 38.5 H226.5 V45 L224.5 47 H219Z" fill="#4da2ea"/><path d="M219 40.5 L221 38.5 H226.5 L224.5 40.5Z" fill="#8cc4f2"/><path d="M212.5 44.5 L214.5 42.5 H219 V51 L217 53 H212.5Z" fill="#3f9ae6"/><path d="M212.5 44.5 L214.5 42.5 H219 L217 44.5Z" fill="#8cc4f2"/><rect x="217" y="44.5" width="7.5" height="6.5" fill="#3f9ae6"/><path d="M232.5 40.5 L234.5 38.5 H246.5 V43 L244.5 45 H232.5Z" fill="#4da2ea"/><path d="M232.5 40.5 L234.5 38.5 H246.5 L244.5 40.5Z" fill="#8cc4f2"/><path d="M232.5 46.3 H246.5" stroke="#4da2ea" stroke-width="0.9"/><path d="M232.5 47.5 H244.5 L246.5 46 V50.5 L244.5 52.5 H232.5Z" fill="#dcdcdc" stroke="#999" stroke-width="0.5"/><path d="M259.4 39.5 V51.5 M253.2 45.5 H265.6" stroke="#222" stroke-width="1"/><path d="M259.4 38 L257.4 40.6 H261.4Z M259.4 53 L257.4 50.4 H261.4Z M252 45.5 L254.6 43.5 V47.5Z M266.8 45.5 L264.2 43.5 V47.5Z" fill="#222"/><path d="M279 42 L281 40 H290.5 V50 L288.5 52 H279Z" fill="#d6d6d6" stroke="#999" stroke-width="0.5"/><path d="M277 40 H282" stroke="#1f8fe6" stroke-width="1.4"/><path d="M282.5 40 L280.5 38 V42Z" fill="#1f8fe6"/><ellipse cx="286" cy="50" rx="2" ry="1.3" transform="rotate(-35 286 50)" fill="none" stroke="#333" stroke-width="0.9"/><ellipse cx="289" cy="48" rx="2" ry="1.3" transform="rotate(-35 289 48)" fill="none" stroke="#333" stroke-width="0.9"/><rect x="296.5" y="41" width="5.5" height="5" fill="#4da2ea"/><rect x="296.5" y="46.5" width="5.5" height="5.5" fill="#dcdcdc" stroke="#999" stroke-width="0.4"/><rect x="302.5" y="46.5" width="6" height="5.5" fill="#dcdcdc" stroke="#999" stroke-width="0.4"/><path d="M296.5 41 L298.5 39.3 H303 L302 41Z" fill="#8cc4f2"/><circle cx="307.5" cy="41" r="2" fill="#f5a300"/><path d="M307.5 37.8 v6.4 M304.3 41 h6.4" stroke="#f5a300" stroke-width="0.6"/><rect x="316.5" y="46.5" width="7" height="5" fill="#f0f0f0" stroke="#888" stroke-width="0.5"/><line x1="323.5" y1="39" x2="323.5" y2="52" stroke="#e88a8a" stroke-width="0.8"/><rect x="324" y="39" width="6.8" height="6" fill="#4da2ea"/><rect x="336" y="38.5" width="2.6" height="2.4" fill="#4da2ea"/><rect x="337" y="41" width="3" height="11" fill="#f4f4f4" stroke="#999" stroke-width="0.4"/><rect x="343" y="41.5" width="8.5" height="10.5" fill="#e6e6e6" stroke="#777" stroke-width="0.5"/><rect x="343" y="41.5" width="8.5" height="1.6" fill="#555"/><path d="M343 45.5 H351.5 M343 48.5 H351.5 M346 43 V52 M348.8 43 V52" stroke="#999" stroke-width="0.4"/><path d="M364 40.5 L366 38.5 H377 V48 L375 50 H364Z" fill="#d9d9d9" stroke="#aaa" stroke-width="0.5"/><rect x="364" y="40.5" width="11" height="9.5" fill="#e4e4e4" stroke="#aaa" stroke-width="0.4"/><path d="M373 49.5 H379 M373 51.5 H379" stroke="#444" stroke-width="0.7"/><path d="M374.5 47 V50" stroke="#1f8fe6" stroke-width="0.9"/><rect x="384" y="38.5" width="13.5" height="13" fill="#ececec" stroke="#666" stroke-width="0.6"/><rect x="384" y="38.5" width="13.5" height="2" fill="#666"/><path d="M384 43.5 H397.5 M384 46.5 H397.5 M388.5 40.5 V51.5 M392.5 40.5 V51.5" stroke="#888" stroke-width="0.4"/><path d="M393 49.5 H399 M393 51.5 H399" stroke="#444" stroke-width="0.7"/><path d="M394.5 47 V50" stroke="#1f8fe6" stroke-width="0.9"/><path d="M423.8 43 L427.5 39.5 V50.5 L423.8 53.5Z" fill="#e4e4e4" stroke="#8a8a8a" stroke-width="0.5"/><path d="M427.3 42.5 L431.8 39 V49.5 L427.3 53Z" fill="#3cb04a"/><path d="M433.3 42.5 L438 38.8 V49.3 L433.3 53Z" fill="#e8884a"/><rect x="475.5" y="46.5" width="13.5" height="3" fill="#f0a010"/><path d="M476 42 V46 M488.5 42 V46 M476 44 H488.5" stroke="#666" stroke-width="0.6"/><rect x="516" y="38.5" width="10.5" height="3" fill="#4da2ea"/><rect x="518.8" y="41.5" width="5" height="10.5" fill="#3f9ae6"/><path d="M526.8 46.5 v6 M523.8 49.5 h6" stroke="#1fa83c" stroke-width="1.6"/><rect x="535.5" y="38.5" width="13.5" height="13.5" fill="#7ab8ee"/><path d="M535.5 49 L539.5 44 L543 47.5 L545 46 L549 49.5 V52 H535.5Z" fill="#3a8bd3"/><circle cx="546" cy="41.8" r="1.4" fill="#fff6b0"/><rect x="572.5" y="36.2" width="18" height="18.2" fill="#1a8fde"/><circle cx="580.5" cy="45.5" r="5.5" fill="none" stroke="#8fd07a" stroke-width="0.7" stroke-dasharray="1.2 1.2"/><path d="M583.5 45.8 L583.5 52.5 L585 51 L586.5 53.5 L587.5 53 L586.3 50.5 L588.5 50.5Z" fill="#fff"/>
</svg>

<!-- browser panel -->
<div class="a" style="left:0;top:66.5px;width:84.5px;height:11px;background:#f0f0f0;box-shadow:0 0.5px 1px rgba(0,0,0,0.15)"></div>
<svg width="90" height="90" viewBox="0 0 90 90">
 <circle cx="77.5" cy="72.2" r="2.3" fill="#222"/><rect x="76.2" y="71.8" width="2.6" height="0.8" fill="#fff"/>
</svg>
<div class="a" style="left:28.3px;top:80.3px;width:8.2px;height:8.8px;background:#f0f0f0"></div><div class="a" style="left:0;top:81.5px;width:27px;height:7.2px;background:#8c8c8c"></div>
<div class="t" style="left:1.2px;top:82.2px;font-size:6px;color:#fff;letter-spacing:-0.25px">guardar)</div>
<svg width="90" height="90" viewBox="0 0 90 90">
 <circle cx="31.8" cy="84.8" r="3.1" fill="#f6f6f6" stroke="#8a8a8a" stroke-width="0.7"/><circle cx="31.8" cy="84.8" r="1.5" fill="#2a3548"/>
</svg>
<div class="bi" style="top:92.2px;width:56.7px"></div><div class="bt" style="left:0;top:93.6px">guración del documento</div>
<div class="bi" style="top:103px;width:31.5px"></div><div class="bt" style="left:1.8px;top:104.4px">guardadas</div>
<div class="bi" style="top:114.2px;width:18.75px"></div><div class="bt" style="left:-1.2px;top:115.6px">Origen</div>
<div class="bi" style="top:125.3px;width:22.2px"></div><div class="bt" style="left:-1.6px;top:126.7px">Cuerpos</div>
<div class="bi" style="top:136.3px;width:20.25px"></div><div class="bt" style="left:-1.8px;top:137.7px">Bocetos</div>

<!-- nav bar -->
<div class="a" style="left:245.5px;top:344.5px;width:110px;height:12px;background:rgba(244,244,244,0.8)"></div>
<svg width="600" height="400" viewBox="0 0 600 400">
<path d="M250.3 346.3 L254 350 L250.3 353.7 L246.6 350Z" fill="#eee" stroke="#999" stroke-width="0.7"/><circle cx="250.3" cy="350" r="0.9" fill="#4a90d8"/><path d="M256.8 349.3 h2.4 l-1.2 1.5z" fill="#333"/><rect x="262.5" y="348" width="6.5" height="4.5" fill="#8a8a8a"/><rect x="263.3" y="346.8" width="1.5" height="1.4" fill="#8a8a8a"/><rect x="266.8" y="346.8" width="1.5" height="1.4" fill="#8a8a8a"/><path d="M262.5 349.5 h6.5" stroke="#ddd" stroke-width="0.5"/><path d="M275 350 L275 348 M276.5 350 V346.5 M278 350 V346.3 M279.5 350 V347 M275 350 Q274.5 353.5 277.5 354 Q281 354 280.8 350 V348" stroke="#888" stroke-width="0.8" fill="#f4f4f4" stroke-linecap="round"/><circle cx="289" cy="349" r="2.4" fill="#fff" stroke="#444" stroke-width="0.9"/><path d="M290.8 350.8 L293.5 353.5" stroke="#333" stroke-width="1.2"/><circle cx="300.8" cy="349" r="2.4" fill="#fff" stroke="#444" stroke-width="0.9"/><path d="M302.6 350.8 L305.3 353.5" stroke="#333" stroke-width="1.2"/><rect x="298" y="346.3" width="4" height="3" fill="none" stroke="#888" stroke-width="0.4"/><path d="M308 349.3 h2.4 l-1.2 1.5z" fill="#333"/><rect x="314" y="346.6" width="7" height="5" fill="#5a8fd0" stroke="#3a6aa0" stroke-width="0.5"/><rect x="316" y="351.8" width="3" height="1.6" fill="#666"/><path d="M322 349.3 h2.4 l-1.2 1.5z" fill="#333"/><rect x="328.2" y="346.6" width="6.6" height="6.6" fill="#8e8e8e" stroke="#666" stroke-width="0.4"/><rect x="328.6" y="347" width="6" height="2" fill="#b0b0b0"/><path d="M336.4 349.3 h2.4 l-1.2 1.5z" fill="#333"/><rect x="342" y="346.6" width="7" height="6.6" fill="#6f9fd8" stroke="#3a6aa0" stroke-width="0.5"/><path d="M345.5 346.6 V353.2 M342 349.9 H349" stroke="#e8eef8" stroke-width="0.5"/><path d="M350.4 349.3 h2.4 l-1.2 1.5z" fill="#333"/>
</svg>

<!-- comments -->
<div class="a" style="left:0;top:344.7px;width:84.7px;height:10.6px;background:#f0f0f0;box-shadow:0 0.5px 1px rgba(0,0,0,0.15)"></div>
<svg width="600" height="400" viewBox="0 0 600 400">
 <circle cx="77.5" cy="350.5" r="2.3" fill="#222"/><path d="M76.2 350.5 h2.6 M77.5 349.2 v2.6" stroke="#fff" stroke-width="0.7"/>
</svg>

<!-- timeline -->
<div class="a" style="left:0;top:358.2px;width:600px;height:21.1px;background:#f0f0f0"></div>
<div class="a" style="left:0;top:379.3px;width:600px;height:1.7px;background:#fafafa"></div>
<svg width="600" height="400" viewBox="0 0 600 400">
<rect x="0" y="366" width="1.6" height="7.5" fill="#555"/><rect x="12.3" y="366" width="6.6" height="6.3" fill="#f6f6f6" stroke="#6fa8dc" stroke-width="0.45" stroke-dasharray="0.8 0.6"/><path d="M13.5 367.5 h3 M13.5 369 h2" stroke="#999" stroke-width="0.4"/><path d="M15.5 371.8 L19.2 368.2" stroke="#e8a030" stroke-width="1.1"/><path d="M15.4 372 l0.9 -0.1 l-0.7 -0.7z" fill="#c03030"/><path d="M23.8 367.2 L25.0 366 H30.5 V371.3 L29.3 372.5 H23.8Z" fill="#4da2ea"/><path d="M23.8 367.2 L25.0 366 H30.5 L29.3 367.2Z" fill="#8cc4f2"/><path d="M29.3 367.2 L30.5 366 V371.3 L29.3 372.5Z" fill="#2f80c8"/><rect x="34.5" y="366" width="6.6" height="6.3" fill="#f6f6f6" stroke="#6fa8dc" stroke-width="0.45" stroke-dasharray="0.8 0.6"/><path d="M35.7 367.5 h3 M35.7 369 h2" stroke="#999" stroke-width="0.4"/><path d="M37.7 371.8 L41.400000000000006 368.2" stroke="#e8a030" stroke-width="1.1"/><path d="M37.6 372 l0.9 -0.1 l-0.7 -0.7z" fill="#c03030"/><path d="M45.8 367.2 L47.0 366 H52.5 V371.3 L51.3 372.5 H45.8Z" fill="#4da2ea"/><path d="M45.8 367.2 L47.0 366 H52.5 L51.3 367.2Z" fill="#8cc4f2"/><path d="M51.3 367.2 L52.5 366 V371.3 L51.3 372.5Z" fill="#2f80c8"/><rect x="56.599999999999994" y="366" width="6.6" height="6.3" fill="#f6f6f6" stroke="#6fa8dc" stroke-width="0.45" stroke-dasharray="0.8 0.6"/><path d="M57.8 367.5 h3 M57.8 369 h2" stroke="#999" stroke-width="0.4"/><path d="M59.8 371.8 L63.5 368.2" stroke="#e8a030" stroke-width="1.1"/><path d="M59.699999999999996 372 l0.9 -0.1 l-0.7 -0.7z" fill="#c03030"/><path d="M68.0 367.2 L69.2 366 H74.7 V371.3 L73.5 372.5 H68.0Z" fill="#4da2ea"/><path d="M68.0 367.2 L69.2 366 H74.7 L73.5 367.2Z" fill="#8cc4f2"/><path d="M73.5 367.2 L74.7 366 V371.3 L73.5 372.5Z" fill="#2f80c8"/><rect x="81.7" y="368.5" width="5" height="4" fill="#7cb8ea" stroke="#4a8ac8" stroke-width="0.4"/><rect x="79.2" y="365.8" width="1.8" height="1.8" fill="#e03030"/><path d="M82.2 369.8 h4" stroke="#fff" stroke-width="0.5"/><rect x="92.5" y="368.5" width="5" height="4" fill="#7cb8ea" stroke="#4a8ac8" stroke-width="0.4"/><rect x="90" y="365.8" width="1.8" height="1.8" fill="#e03030"/><path d="M93 369.8 h4" stroke="#fff" stroke-width="0.5"/><rect x="101.6" y="366" width="6.6" height="6.5" fill="#d8d8d8" stroke="#888" stroke-width="0.45"/><rect x="102.8" y="368" width="4" height="3.2" fill="#4da2ea"/><rect x="112.3" y="366" width="6.6" height="6.3" fill="#f6f6f6" stroke="#6fa8dc" stroke-width="0.45" stroke-dasharray="0.8 0.6"/><path d="M113.5 367.5 h3 M113.5 369 h2" stroke="#999" stroke-width="0.4"/><path d="M115.5 371.8 L119.2 368.2" stroke="#e8a030" stroke-width="1.1"/><path d="M115.4 372 l0.9 -0.1 l-0.7 -0.7z" fill="#c03030"/><path d="M123.8 367.2 L125.0 366 H130.5 V371.3 L129.3 372.5 H123.8Z" fill="#4da2ea"/><path d="M123.8 367.2 L125.0 366 H130.5 L129.3 367.2Z" fill="#8cc4f2"/><path d="M129.3 367.2 L130.5 366 V371.3 L129.3 372.5Z" fill="#2f80c8"/><path d="M135.2 367.2 L136.39999999999998 366 H141.89999999999998 V371.3 L140.7 372.5 H135.2Z" fill="#4da2ea"/><path d="M135.2 367.2 L136.39999999999998 366 H141.89999999999998 L140.7 367.2Z" fill="#8cc4f2"/><path d="M140.7 367.2 L141.89999999999998 366 V371.3 L140.7 372.5Z" fill="#2f80c8"/><path d="M146.3 367.2 L147.5 366 H153.0 V371.3 L151.8 372.5 H146.3Z" fill="#4da2ea"/><path d="M146.3 367.2 L147.5 366 H153.0 L151.8 367.2Z" fill="#8cc4f2"/><path d="M151.8 367.2 L153.0 366 V371.3 L151.8 372.5Z" fill="#2f80c8"/><rect x="156.60000000000002" y="366" width="6.6" height="6.3" fill="#f6f6f6" stroke="#6fa8dc" stroke-width="0.45" stroke-dasharray="0.8 0.6"/><path d="M157.8 367.5 h3 M157.8 369 h2" stroke="#999" stroke-width="0.4"/><path d="M159.8 371.8 L163.5 368.2" stroke="#e8a030" stroke-width="1.1"/><path d="M159.70000000000002 372 l0.9 -0.1 l-0.7 -0.7z" fill="#c03030"/><path d="M168.0 367.2 L169.2 366 H174.7 V371.3 L173.5 372.5 H168.0Z" fill="#4da2ea"/><path d="M168.0 367.2 L169.2 366 H174.7 L173.5 367.2Z" fill="#8cc4f2"/><path d="M173.5 367.2 L174.7 366 V371.3 L173.5 372.5Z" fill="#2f80c8"/><path d="M16.3 377.4 H172" stroke="#aaa" stroke-width="0.6"/><path d="M15.8 375.5 V377" stroke="#999" stroke-width="0.5"/><path d="M27.1 375.5 V377" stroke="#999" stroke-width="0.5"/><path d="M38.0 375.5 V377" stroke="#999" stroke-width="0.5"/><path d="M49.099999999999994 375.5 V377" stroke="#999" stroke-width="0.5"/><path d="M60.099999999999994 375.5 V377" stroke="#999" stroke-width="0.5"/><path d="M71.3 375.5 V377" stroke="#999" stroke-width="0.5"/><path d="M83.0 375.5 V377" stroke="#999" stroke-width="0.5"/><path d="M93.8 375.5 V377" stroke="#999" stroke-width="0.5"/><path d="M104.6 375.5 V377" stroke="#999" stroke-width="0.5"/><path d="M115.8 375.5 V377" stroke="#999" stroke-width="0.5"/><path d="M127.1 375.5 V377" stroke="#999" stroke-width="0.5"/><path d="M138.5 375.5 V377" stroke="#999" stroke-width="0.5"/><path d="M149.60000000000002 375.5 V377" stroke="#999" stroke-width="0.5"/><path d="M160.10000000000002 375.5 V377" stroke="#999" stroke-width="0.5"/><path d="M171.3 375.5 V377" stroke="#999" stroke-width="0.5"/><path d="M174.8 363.3 H179 L177.6 366 V377.5 H176.2 V366Z" fill="#333"/>
</svg>

<!-- taskbar -->
<div class="a" style="left:0;top:381px;width:100px;height:19px;background:#f2f2f2"></div>
<div class="a" style="left:100px;top:381px;width:500px;height:19px;background:#202020"></div>
<div class="a" style="left:193px;top:381px;width:22px;height:19px;background:#3b3b3b"></div>
<div class="t" style="left:-1px;top:386.5px;font-size:8px;color:#444">ar</div>
<svg width="600" height="400" viewBox="0 0 600 400">
<path d="M78 385 Q78.8 389.6 84 390.5 Q78.8 391.4 78 396 Q77.2 391.4 72 390.5 Q77.2 389.6 78 385Z" fill="#f6b816"/><path d="M88.5 389 Q88.9 391.6 91 392 Q88.9 392.4 88.5 395 Q88.1 392.4 86 392 Q88.1 391.6 88.5 389Z" fill="#f6b816"/><path d="M69.3 392.6 L71 394.3 L69.3 396 L67.6 394.3Z" fill="#2a9af0"/><circle cx="85.2" cy="386.2" r="0.8" fill="#e85a2a"/><circle cx="94" cy="395" r="0.8" fill="#7ac24a"/><path d="M107 388 H113 M107 393.5 H113 M108 388 V393.5 M112 388 V393.5" stroke="#ddd" stroke-width="0.9" fill="none"/><path d="M115 388.3 V393.5" stroke="#ddd" stroke-width="0.9"/><defs><linearGradient id="cpA" x1="0" y1="0" x2="0" y2="1"><stop offset="0" stop-color="#38b4f0"/><stop offset="0.6" stop-color="#5a5cf0"/><stop offset="1" stop-color="#a848e8"/></linearGradient><linearGradient id="cpB" x1="0" y1="0" x2="0" y2="1"><stop offset="0" stop-color="#f0a828"/><stop offset="0.5" stop-color="#f06a6a"/><stop offset="1" stop-color="#e84aa8"/></linearGradient></defs><path d="M131.8 386.5 Q132.6 385.6 134 385.6 H136.2 L133 394.8 Q132.5 396 131 396 H130.2 Q129.2 396 129.5 395 Z" fill="url(#cpA)"/><path d="M137.8 386 Q138.3 385.6 139.5 385.6 H139.8 Q140.8 385.6 140.5 386.6 L138.2 395 Q137.6 396 136.4 396 H133.8 Z" fill="url(#cpB)"/><path d="M133.5 390.5 L135.2 386.2 H138.5 L136.6 391.5 Z" fill="#7a5ef0" opacity="0.85"/><path d="M152.5 386.5 H157 L158.2 387.8 H163.3 V395.5 H152.5Z" fill="#f5c242"/><rect x="152.5" y="389" width="10.8" height="6.5" fill="#ffd85a"/><rect x="155.5" y="392.5" width="5" height="3" fill="#2a7ad8"/><circle cx="180.5" cy="391" r="5.8" fill="#e0403a"/><path d="M180.5 391 L175.5 393.9 A5.8 5.8 0 0 1 180.5 385.2 A5.8 5.8 0 0 0 175 389.5Z" fill="#f0c030"/><path d="M180.5 391 L175.3 388 A5.8 5.8 0 0 0 183.4 396 Z" fill="#2fa84f"/><path d="M180.5 391 L185.5 388 A5.8 5.8 0 0 1 183.4 396Z" fill="#f5c518"/><circle cx="180.5" cy="391" r="2.6" fill="#fff"/><circle cx="180.5" cy="391" r="2" fill="#2a7ae8"/><rect x="198" y="385" width="11" height="9" rx="1" fill="#f07a20"/><rect x="198" y="393.5" width="11" height="2.5" fill="#a84810"/><path d="M202 392.5 V387 H205.5 M202 389.5 H205" stroke="#fff" stroke-width="1.1" fill="none"/><rect x="221" y="385" width="11" height="11" rx="1.8" fill="#1fac4c"/><rect x="223.8" y="387.5" width="2.2" height="6" fill="#fff"/><rect x="227" y="387.5" width="2.2" height="2.6" fill="#fff"/><rect x="227" y="391" width="2.2" height="2.5" fill="#fff"/><rect x="172" y="399" width="18" height="1" fill="#7fb3e8"/><rect x="193" y="399" width="22" height="1" fill="#7fb3e8"/><rect x="216" y="399" width="20" height="1" fill="#7fb3e8"/><path d="M529.3 392.8 L532.2 389.8 L535.1 392.8" stroke="#ddd" stroke-width="0.8" fill="none"/><rect x="541" y="388.3" width="4.5" height="5.5" rx="1.5" fill="none" stroke="#ccc" stroke-width="0.8"/><circle cx="543.5" cy="391" r="1" fill="#ccc"/><rect x="550.5" y="388.7" width="8" height="4.5" fill="#ddd"/><rect x="550" y="388" width="2.5" height="2" fill="#ddd"/><path d="M563 393.8 L568.5 388.5 V393.8Z" fill="none" stroke="#999" stroke-width="0.8"/><path d="M572.5 389.8 H574.3 L576.5 388 V394 L574.3 392.2 H572.5Z" fill="none" stroke="#ccc" stroke-width="0.7"/><path d="M578 389.5 Q579 391 578 392.5 M579.6 388.5 Q581 391 579.6 393.5" stroke="#888" stroke-width="0.6" fill="none"/><path d="M586 394 L593.5 388" stroke="#ccc" stroke-width="1.8"/><circle cx="587" cy="393" r="1.5" fill="#202020" stroke="#ccc" stroke-width="0.7"/><circle cx="592.5" cy="389" r="1.5" fill="#202020" stroke="#ccc" stroke-width="0.7"/>
</svg>
</body></html>
